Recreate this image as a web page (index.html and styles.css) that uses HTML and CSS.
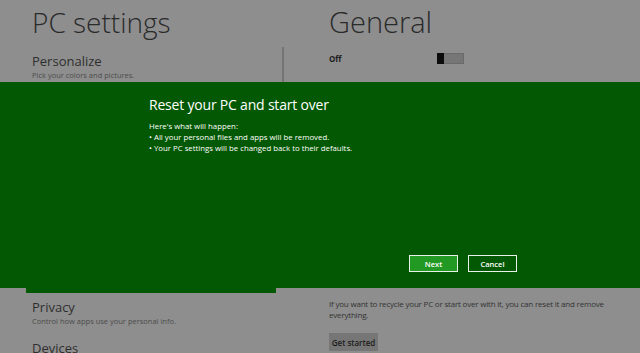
FILE: index.html
```html
<!DOCTYPE html>
<html lang="en">
<head>
    <meta charset="UTF-8">
    <meta name="viewport" content="width=device-width, initial-scale=1.0">
    <title>PC settings</title>
    <link rel="stylesheet" href="styles.css">
</head>
<body>
    <div class="page">
        <div class="nav">
            <h1 class="title">PC settings</h1>
            <div class="scroll-thumb"></div>
            <ul class="nav-list">
                <li class="nav-item">
                    <div class="item-name">Personalize</div>
                    <div class="item-sub">Pick your colors and pictures.</div>
                </li>
                <li class="nav-item">
                    <div class="item-name">Users</div>
                    <div class="item-sub">Add users and change passwords.</div>
                </li>
                <li class="nav-item">
                    <div class="item-name">Notifications</div>
                    <div class="item-sub">Choose which apps notify you.</div>
                </li>
                <li class="nav-item">
                    <div class="item-name">Search</div>
                    <div class="item-sub">Manage your search history.</div>
                </li>
                <li class="nav-item">
                    <div class="item-name">Share</div>
                    <div class="item-sub">Choose apps to share with.</div>
                </li>
                <li class="nav-item selected">
                    <div class="item-name">General</div>
                    <div class="item-sub">Change time, language and more.</div>
                </li>
                <li class="nav-item">
                    <div class="item-name">Privacy</div>
                    <div class="item-sub">Control how apps use your personal info.</div>
                </li>
                <li class="nav-item">
                    <div class="item-name">Devices</div>
                    <div class="item-sub">Add and remove devices.</div>
                </li>
            </ul>
        </div>

        <div class="content">
            <h1 class="title general">General</h1>
            <div class="toggle-row">
                <span class="toggle-label">Off</span>
                <span class="toggle"><span class="thumb"></span></span>
            </div>
            <div class="section">
                <p>If you want to recycle your PC or start over with it, you can reset it and remove everything.</p>
                <button class="btn-gray">Get started</button>
            </div>
        </div>
    </div>

    <div class="overlay">
        <div class="dialog">
            <h2>Reset your PC and start over</h2>
            <p>Here's what will happen:</p>
            <ul class="bullets">
                <li>&bull; All your personal files and apps will be removed.</li>
                <li>&bull; Your PC settings will be changed back to their defaults.</li>
            </ul>
            <div class="buttons">
                <button class="btn next">Next</button>
                <button class="btn cancel">Cancel</button>
            </div>
        </div>
    </div>
</body>
</html>
```

FILE: styles.css
```css
body {
    font-family: "Open Sans", "Noto Sans", sans-serif;
    margin: 0;
    padding: 0;
    background-color: #8e8e8e;
    color: #262626;
    height: 353px;
    overflow: hidden;
}

.page {
    display: flex;
}

.nav {
    position: relative;
    width: 258px;
    padding-left: 26px;
}

/* scroll indicator sitting over the list edge */
.scroll-thumb {
    position: absolute;
    left: 282px;
    top: 47px;
    width: 2px;
    height: 60px;
    background-color: #747474;
}

.title {
    margin: 0;
    padding: 4px 0 7px 6px;
    font-size: 28px;
    font-weight: 300;
    line-height: 36px;
    color: #2a2a2a;
}

.nav-list {
    list-style-type: none;
    margin: 0;
    padding: 0;
    width: 256px;
}

.nav-item {
    width: 250px;
    height: 41px;
    box-sizing: border-box;
    padding: 5px 6px 0 6px;
}

.nav-item.selected {
    background-color: #035803;
}

.item-name {
    font-size: 13px;
    line-height: 18px;
    color: #2e2e2e;
}

.item-sub {
    font-size: 7.5px;
    line-height: 10px;
    color: #4c4c4c;
}

.content {
    margin-left: 45px;
    flex: 1;
}

.title.general {
    padding: 4px 0 7px 0;
    font-size: 29px;
}

.toggle-row {
    display: flex;
    align-items: center;
    margin-top: 5px;
    height: 12px;
}

.toggle-label {
    width: 108px;
    font-size: 8px;
    font-weight: 700;
    color: #1c1c1c;
}

.toggle {
    display: flex;
    width: 27px;
    height: 11px;
    background-color: #767676;
    border: 1px solid #6a6a6a;
    box-sizing: border-box;
}

.thumb {
    width: 7px;
    height: 11px;
    margin-top: -1px;
    margin-left: -1px;
    background-color: #0c0c0c;
}

.section {
    margin-top: 234px;
}

.section p {
    margin: 0 0 13px 0;
    width: 290px;
    font-size: 8px;
    letter-spacing: -0.2px;
    line-height: 11px;
    color: #333;
}

.btn-gray {
    display: block;
    width: 49px;
    height: 18px;
    padding: 0;
    border: none;
    background-color: #767676;
    color: #1c1c1c;
    font-family: "Open Sans", sans-serif;
    font-size: 8px;
    font-weight: 600;
}

.overlay {
    position: absolute;
    top: 82px;
    left: 0;
    right: 0;
    height: 206px;
    background-color: #035803;
    color: #fff;
}

.dialog {
    display: flex;
    flex-direction: column;
    box-sizing: border-box;
    height: 206px;
    width: 368px;
    margin-left: 149px;
    padding: 13px 0 16px 0;
}

.dialog h2 {
    margin: 0 0 6px 0;
    font-size: 14px;
    letter-spacing: -0.2px;
    font-weight: 400;
    line-height: 20px;
}

.dialog p {
    margin: 0;
    font-size: 7.8px;
    line-height: 11px;
}

.bullets {
    list-style-type: none;
    margin: 0;
    padding: 0;
    font-size: 7.8px;
    line-height: 11px;
}

.buttons {
    display: flex;
    justify-content: flex-end;
    gap: 10px;
    margin-top: auto;
}

.btn {
    width: 49px;
    height: 17px;
    padding: 0;
    border: 1px solid #e8f0e8;
    color: #fff;
    font-family: "Open Sans", sans-serif;
    font-size: 7.5px;
    font-weight: 600;
}

.btn.next {
    background-color: #229922;
}

.btn.cancel {
    background-color: #035803;
}
```
